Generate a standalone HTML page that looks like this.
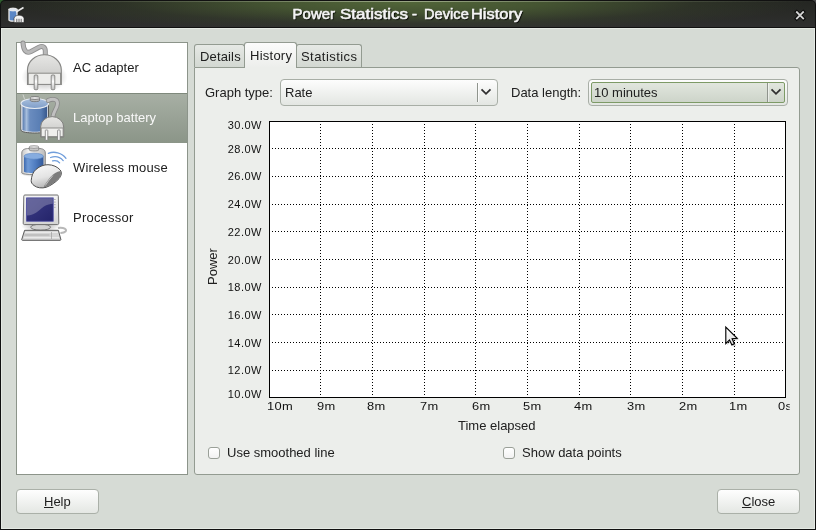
<!DOCTYPE html>
<html><head><meta charset="utf-8">
<style>
*{margin:0;padding:0;box-sizing:border-box}
html,body{width:816px;height:530px;overflow:hidden;background:#1a1a1a}
body{position:relative;font-family:"Liberation Sans",sans-serif;font-size:13px;color:#202020}
.a{position:absolute;white-space:nowrap}
#win{position:absolute;left:0;top:0;width:816px;height:530px;background:#111;border-radius:5px 5px 0 0}
#tb{position:absolute;left:1px;top:1px;width:814px;height:26px;border-radius:4px 4px 0 0;background:radial-gradient(ellipse 400px 30px at 407px 1px,rgba(82,102,57,1) 0%,rgba(74,92,52,.85) 35%,rgba(60,72,45,.35) 72%,rgba(40,44,36,0) 100%),linear-gradient(#242622,#2a2b28 55%,#2f2f2f)}
#tbhl{position:absolute;left:4px;top:1px;width:808px;height:1px;background:linear-gradient(90deg,rgba(150,160,140,0) 0%,rgba(150,162,135,.35) 25%,rgba(170,182,150,.8) 50%,rgba(150,162,135,.35) 75%,rgba(150,160,140,0) 100%)}
#title .t{position:absolute;top:5px;font:15px "Liberation Sans",sans-serif;color:#f4f4f4;-webkit-text-stroke:0.6px #f4f4f4;text-shadow:1px 1px 1px #000;transform-origin:0 0;line-height:normal}
#content{position:absolute;left:1px;top:28px;width:814px;height:501px;background:#d6dbd5;border:1px solid #e4e9e3}
#list{position:absolute;left:16px;top:42px;width:172px;height:433px;background:#fff;border:1px solid #8c948a}
.row{position:absolute;left:0;width:170px;height:50px}
.row .lbl{position:absolute;left:56px;top:17px}
.row.sel{background:linear-gradient(#a7afa4,#8b9588);border-top:1px solid #7f897c}
.row.sel .lbl{color:#f8f8f8;top:16px}
.tab{position:absolute;border:1px solid #939b91;border-bottom:none;border-radius:3px 3px 0 0;background:linear-gradient(#e6e9e5,#d3d8d2)}
.tab .tl{position:absolute;top:4px;left:5px}
#frame{position:absolute;left:194px;top:67px;width:606px;height:408px;background:#eceeeb;border:1px solid #939b91;border-radius:0 3px 3px 3px}
.combo{position:absolute;height:27px;border:1px solid #a8aea6;border-radius:4px;background:linear-gradient(#fdfdfd,#e3e6e2)}
.chk{position:absolute;width:12px;height:12px;border:1px solid #9aa098;border-radius:3px;background:linear-gradient(#fff,#f2f2f2)}
.btn{position:absolute;height:25px;border:1px solid #aab0a8;border-radius:4px;background:linear-gradient(#fefefe,#e4e7e3)}
.yl{position:absolute;font-size:11px;line-height:11px;letter-spacing:0.5px;color:#111;text-align:right;width:60px}
.xl{position:absolute;font-size:11px;line-height:11px;letter-spacing:0.3px;color:#111;transform:scaleX(1.17);transform-origin:0 0}
</style></head><body>
<div id="root" style="position:absolute;left:0;top:0;width:816px;height:530px;will-change:transform">
<div style="position:absolute;left:0;top:0;width:6px;height:6px;background:#2f5f2f"></div><div style="position:absolute;right:0;top:0;width:6px;height:6px;background:#4a4a4a"></div>
<div id="win"></div>
<div id="title"><div id="tb"></div><div id="tbhl"></div><div class="t" style="left:292.6px;transform:scaleX(1.0)">Power</div><div class="t" style="left:340.2px;transform:scaleX(1.135)">Statistics</div><div class="t" style="left:412.0px;transform:scaleX(1.0)">-</div><div class="t" style="left:423.9px;transform:scaleX(0.977)">Device</div><div class="t" style="left:470.6px;transform:scaleX(1.095)">History</div></div>
<div id="content"></div>

<div id="list">
  <div class="row" style="top:0"><div class="lbl">AC adapter</div></div>
  <div class="row sel" style="top:50px"><div class="lbl">Laptop battery</div></div>
  <div class="row" style="top:100px"><div class="lbl" style="letter-spacing:0.17px">Wireless mouse</div></div>
  <div class="row" style="top:150px"><div class="lbl" style="letter-spacing:0.22px">Processor</div></div>
</div>

<div class="tab" style="left:194px;top:44px;width:51px;height:23px"><div class="tl" style="letter-spacing:0.15px">Details</div></div>
<div class="tab" style="left:296px;top:44px;width:66px;height:23px"><div class="tl" style="left:4px;letter-spacing:0.45px">Statistics</div></div>
<div id="frame"></div>
<div class="tab" style="left:244px;top:42px;width:53px;height:26px;background:linear-gradient(#fbfbfb,#eceeeb);z-index:2"><div class="tl" style="top:5px;left:5px;letter-spacing:0.25px">History</div></div>

<div class="a" style="left:205px;top:85px">Graph type:</div>
<div class="combo" style="left:280px;top:79px;width:218px"></div>
<div class="a" style="left:285px;top:85px">Rate</div>
<div class="a" style="left:511px;top:85px">Data length:</div>
<div class="combo" style="left:588px;top:79px;width:200px"></div>
<div style="position:absolute;left:591px;top:82px;width:194px;height:21px;border:1px solid #7d9a66;border-radius:2px;background:linear-gradient(#e1e6de,#cdd4c9)"></div>
<div class="a" style="left:594px;top:85px">10 minutes</div>
<svg class="a" style="left:0;top:0" width="816" height="530">
<path d="M477.5 83V102" stroke="#8f948d" stroke-width="1"/><path d="M478.5 83V102" stroke="#fff" stroke-opacity=".7" stroke-width="1"/>
<path d="M481.5 89.3L486 93.8L490.5 89.3" fill="none" stroke="#303030" stroke-width="1.8"/>
<path d="M767.5 83V102" stroke="#8f948d" stroke-width="1"/><path d="M768.5 83V102" stroke="#fff" stroke-opacity=".5" stroke-width="1"/>
<path d="M771.5 89.3L776 93.8L780.5 89.3" fill="none" stroke="#303030" stroke-width="1.8"/>
</svg>


<svg class="a" style="left:0;top:0" width="816" height="530">
<rect x="269.5" y="121.5" width="516" height="276" fill="#fff" stroke="#000" stroke-width="1"/>
<path d="M320.5 124V397M372.5 124V397M424.5 124V397M475.5 124V397M527.5 124V397M579.5 124V397M630.5 124V397M682.5 124V397M734.5 124V397M272 148.5H785M272 176.5H785M272 204.5H785M272 231.5H785M272 259.5H785M272 287.5H785M272 314.5H785M272 342.5H785M272 370.5H785" stroke="#000" stroke-width="1" stroke-dasharray="1 2" fill="none"/>
</svg>

<div class="yl" style="left:202px;top:120px">30.0W</div>
<div class="yl" style="left:202px;top:144px">28.0W</div>
<div class="yl" style="left:202px;top:171px">26.0W</div>
<div class="yl" style="left:202px;top:199px">24.0W</div>
<div class="yl" style="left:202px;top:227px">22.0W</div>
<div class="yl" style="left:202px;top:255px">20.0W</div>
<div class="yl" style="left:202px;top:282px">18.0W</div>
<div class="yl" style="left:202px;top:310px">16.0W</div>
<div class="yl" style="left:202px;top:338px">14.0W</div>
<div class="yl" style="left:202px;top:365px">12.0W</div>
<div class="yl" style="left:202px;top:389px">10.0W</div>
<div class="xl" style="left:267px;top:401px">10m</div>
<div class="xl" style="left:317px;top:401px">9m</div>
<div class="xl" style="left:367px;top:401px">8m</div>
<div class="xl" style="left:420px;top:401px">7m</div>
<div class="xl" style="left:472px;top:401px">6m</div>
<div class="xl" style="left:523px;top:401px">5m</div>
<div class="xl" style="left:574px;top:401px">4m</div>
<div class="xl" style="left:627px;top:401px">3m</div>
<div class="xl" style="left:679px;top:401px">2m</div>
<div class="xl" style="left:729px;top:401px">1m</div>
<div class="xl" style="left:778px;top:401px;width:10.3px;overflow:hidden">0s</div>
<div class="a" style="left:458px;top:418px">Time elapsed</div>
<div class="a" style="left:205px;top:285px;transform:rotate(-90deg);transform-origin:0 0">Power</div>
<div class="chk" style="left:208px;top:447px"></div>
<div class="a" style="left:227px;top:445px">Use smoothed line</div>
<div class="chk" style="left:503px;top:447px"></div>
<div class="a" style="left:522px;top:445px">Show data points</div>

<div class="btn" style="left:16px;top:489px;width:83px"></div>
<div class="a" style="left:44px;top:494px"><u>H</u>elp</div>
<div class="btn" style="left:717px;top:489px;width:83px"></div>
<div class="a" style="left:742px;top:494px"><u>C</u>lose</div>
<!-- ICONS -->
<svg class="a" style="left:0;top:0;z-index:3" width="816" height="530">
<defs>
<radialGradient id="shd" cx="0.5" cy="0.5" r="0.5"><stop offset="0" stop-color="#000" stop-opacity=".36"/><stop offset="1" stop-color="#000" stop-opacity="0"/></radialGradient>
<linearGradient id="dome" x1="0" y1="0" x2="0" y2="1"><stop offset="0" stop-color="#e6e6e4"/><stop offset="1" stop-color="#c4c4c2"/></linearGradient>
<linearGradient id="prong" x1="0" y1="0" x2="0" y2="1"><stop offset="0" stop-color="#c8c8c8"/><stop offset=".45" stop-color="#fdfdfd"/><stop offset="1" stop-color="#bdbdbd"/></linearGradient>
<linearGradient id="bat" x1="0" y1="0" x2="1" y2="0"><stop offset="0" stop-color="#5275ab"/><stop offset=".17" stop-color="#a7bedd"/><stop offset=".3" stop-color="#6a8cbf"/><stop offset=".75" stop-color="#587db3"/><stop offset="1" stop-color="#37578c"/></linearGradient>
<linearGradient id="battop" x1="0" y1="0" x2="0" y2="1"><stop offset="0" stop-color="#a9bfdd"/><stop offset="1" stop-color="#7e9dc8"/></linearGradient>
<linearGradient id="liq" x1="0" y1="0" x2="1" y2="0"><stop offset="0" stop-color="#3f6aae"/><stop offset=".2" stop-color="#6f9ad6"/><stop offset=".6" stop-color="#4f7cc0"/><stop offset="1" stop-color="#32599a"/></linearGradient>
<linearGradient id="jar" x1="0" y1="0" x2="1" y2="0"><stop offset="0" stop-color="#c8c8c8"/><stop offset=".3" stop-color="#f2f2f2"/><stop offset="1" stop-color="#bcbcbc"/></linearGradient>
<linearGradient id="mouse" x1="0" y1="0" x2="0.3" y2="1"><stop offset="0" stop-color="#fafafa"/><stop offset=".6" stop-color="#e4e4e4"/><stop offset="1" stop-color="#b8b8b8"/></linearGradient>
<linearGradient id="scr" x1="0" y1="0" x2="1" y2="1"><stop offset="0" stop-color="#3c3c86"/><stop offset="1" stop-color="#24246a"/></linearGradient>
<linearGradient id="bez" x1="0" y1="0" x2="0" y2="1"><stop offset="0" stop-color="#f4f4f4"/><stop offset="1" stop-color="#d4d4d4"/></linearGradient>
</defs>

<!-- AC adapter (17,43) -->
<g transform="translate(17,43)">
<ellipse cx="27.5" cy="34" rx="23" ry="15" fill="url(#shd)"/>
<path d="M6,0 C6.5,7 9,11 14,8.5 L22,4.2 C26,2.3 28.3,4.5 28.3,8 L28.3,13" fill="none" stroke="#8f8f8f" stroke-width="5" stroke-linecap="round"/>
<path d="M6,0 C6.5,7 9,11 14,8.5 L22,4.2 C26,2.3 28.3,4.5 28.3,8 L28.3,13" fill="none" stroke="#b9b9b9" stroke-width="3.2" stroke-linecap="round"/>
<path d="M10.5,41.5 V27 A16.9,15.2 0 0 1 44.3,27 V41.5 Z" fill="url(#dome)" stroke="#858583" stroke-width="1.1"/>
<rect x="11.2" y="30.2" width="32.4" height="11.2" fill="#ececea" stroke="#8a8a88" stroke-width="1"/>
<rect x="17.2" y="32" width="3.6" height="14.7" rx="1" fill="url(#prong)" stroke="#7f7f7d" stroke-width=".9"/>
<rect x="34.2" y="32" width="3.6" height="14.7" rx="1" fill="url(#prong)" stroke="#7f7f7d" stroke-width=".9"/>
</g>

<!-- Laptop battery (17,93) -->
<g transform="translate(17,93)">
<path d="M6,1.5 L7.5,6" stroke="#d0d4cf" stroke-width="1" fill="none"/>
<path d="M4,10.5 V37 C4,41 31.5,41 31.5,37 V10.5 Z" fill="#e6e9ee" stroke="#5a5a5a" stroke-width="1"/><path d="M5.3,11 V36.6 C5.3,39.6 30.2,39.6 30.2,36.6 V11 Z" fill="url(#bat)"/>
<path d="M4.8,11 V36.5" stroke="#dfe3ea" stroke-width="1.2" opacity=".8"/>
<ellipse cx="17.75" cy="10.5" rx="13.75" ry="5" fill="url(#battop)" stroke="#e8ecf2" stroke-width="1.2"/>
<path d="M13.3,5 V7.5 C13.3,9 22.5,9 22.5,7.5 V5 Z" fill="#b9b9b9" stroke="#6f6f6f" stroke-width=".8"/>
<ellipse cx="17.9" cy="5" rx="4.6" ry="1.5" fill="#e4e4e4" stroke="#6f6f6f" stroke-width=".8"/>
<path d="M31,7.5 C36,5.5 40.5,6 40.5,10.5 C40.5,15 36.5,18 35.8,24" fill="none" stroke="#8a8a8a" stroke-width="4.6" stroke-linecap="round"/>
<path d="M31,7.5 C36,5.5 40.5,6 40.5,10.5 C40.5,15 36.5,18 35.8,24" fill="none" stroke="#c0c0c0" stroke-width="3" stroke-linecap="round"/>
<path d="M23.6,44 V34 A11.55,10.4 0 0 1 46.7,34 V44 Z" fill="url(#dome)" stroke="#7e7e7c" stroke-width="1"/>
<rect x="24.2" y="35" width="21.9" height="8.6" fill="#efefed" stroke="#868684" stroke-width=".9"/>
<rect x="28.3" y="37" width="2.5" height="10.3" rx=".6" fill="#fafafa" stroke="#7a7a78" stroke-width=".8"/>
<rect x="40.6" y="37" width="2.5" height="10.3" rx=".6" fill="#fafafa" stroke="#7a7a78" stroke-width=".8"/>
</g>

<!-- Wireless mouse (17,143) -->
<g transform="translate(17,143)">
<ellipse cx="17" cy="30" rx="15" ry="4" fill="url(#shd)"/>
<path d="M4.8,30 V10 C4.8,6.5 8,5.5 12,5.5 H21.5 C25.5,5.5 28.3,6.5 28.3,10 V30 C28.3,32 4.8,32 4.8,30 Z" fill="url(#jar)" stroke="#8a8a8a" stroke-width="1"/>
<path d="M7,13.2 V28.5 C7,30.5 26.4,30.5 26.4,28.5 V13.2 Z" fill="url(#liq)"/>
<ellipse cx="16.7" cy="13.2" rx="9.7" ry="3" fill="#86acdf" stroke="#5d86c2" stroke-width=".6"/>
<path d="M12.3,4 V7 C12.3,8.3 21.7,8.3 21.7,7 V4 Z" fill="#c6c6c6" stroke="#7d7d7d" stroke-width=".8"/>
<ellipse cx="17" cy="4" rx="4.7" ry="1.3" fill="#e6e6e6" stroke="#7d7d7d" stroke-width=".7"/>
<path d="M31.3,10.3 C37,8 45,9.5 49,15.3" fill="none" stroke="#6f9ddb" stroke-width="1.3" stroke-linecap="round"/>
<path d="M33.6,14.5 C38,13 43,14 46.2,17.6" fill="none" stroke="#6f9ddb" stroke-width="1.3" stroke-linecap="round"/>
<path d="M35.6,17.9 C38.5,17.2 41,17.9 42.6,19.8" fill="none" stroke="#6f9ddb" stroke-width="1.3" stroke-linecap="round"/>
<path d="M14.2,37.7 C14.5,33 16,29 19,26.4 C23,23 27,21.7 31,21.7 C36,21.8 40.5,23.8 43.2,27 C45,29.5 44.6,32.5 42,35.6 C39,39 34,42.5 29.2,44.3 C25,45.5 20,45 17,42.5 C15,41 14.2,39.5 14.2,37.7 Z" fill="url(#mouse)" stroke="#505050" stroke-width="1"/>
<path d="M43.4,28 C44.6,30.5 44,33 41.5,35.8 C38.5,39.2 33.5,42.6 28.6,44.1 C27.5,44.4 26.5,44 27,43 C29,40 31,37 33.5,34 C36.5,30.5 39.8,28.5 43.4,28 Z" fill="#7c7c7c"/>
<path d="M28.2,42.6 C30.5,39 33,35.8 35.8,32.6" fill="none" stroke="#f0f0f0" stroke-width=".8" opacity=".8"/>
</g>

<!-- Processor (17,193) -->
<g transform="translate(17,193)">
<ellipse cx="24" cy="33" rx="20" ry="6" fill="url(#shd)"/>
<path d="M41,34.9 C47,34 50.5,36.5 48.5,38.5 C47,40 44.5,40 43.4,40.1" fill="none" stroke="#b8b8b8" stroke-width="2"/>
<ellipse cx="23.6" cy="34.2" rx="9.9" ry="3" fill="#d2d2d2" stroke="#7a7a7a" stroke-width="1"/>
<path d="M7.8,2 H40.3 C41,2 41.3,2.5 41.3,3.2 L41.8,30.3 C41.8,31 41.3,31.6 40.6,31.6 H7.4 C6.7,31.6 6.2,31 6.2,30.3 L6.8,3.2 C6.8,2.5 7.2,2 7.8,2 Z" fill="url(#bez)" stroke="#6f6f6f" stroke-width="1"/>
<rect x="9.6" y="4.9" width="26.6" height="23.3" fill="url(#scr)" stroke="#4646a0" stroke-width=".8"/>
<path d="M10,5.3 H35.8 V10.8 C30,11 26,14 22,17.5 C18,21 14,22.5 10,22.6 Z" fill="#8a8ab0" opacity=".55"/>
<g fill="#8a8a8a"><rect x="37.4" y="6" width="1" height="1"/><rect x="37.4" y="8.6" width="1" height="1"/><rect x="37.4" y="11.2" width="1" height="1"/><rect x="37.4" y="13.8" width="1" height="1"/></g>
<path d="M7.6,37.3 H41.4 L43.9,46.6 C43.9,47 43.6,47.3 43.2,47.3 H5.4 C5,47.3 4.7,47 4.7,46.6 Z" fill="#d4d4d4" stroke="#595959" stroke-width="1"/>
<g fill="none" stroke="#f2f2f2" stroke-width=".9"><path d="M8,39.3 H41"/><path d="M7,44.7 H42"/></g>
<g fill="none" stroke="#9c9c9c" stroke-width=".7"><path d="M7.5,42 H32.5"/><path d="M34.5,39 V46"/></g>
</g>

<!-- Title icon -->
<g transform="translate(0,0)">
<path d="M9,9.5 V20 C9,21.5 17,21.5 17,20 V9.5 Z" fill="#5b87c6" stroke="#ececec" stroke-width="1.3"/>
<ellipse cx="13" cy="9.5" rx="4" ry="1.4" fill="#dfe6ef" stroke="#ececec" stroke-width="1"/>
<path d="M16,12 L23.5,7.5" stroke="#ececec" stroke-width="1.6"/>
<path d="M14,22.5 V18.5 C14,16.5 16.5,15.2 19,15.2 C21.5,15.2 24,16.5 24,18.5 V22.5 Z" fill="#f4f4f4" stroke="#2a2a2a" stroke-width=".6"/>
<g stroke="#555" stroke-width=".9"><path d="M16.8,18.8 V22.5"/><path d="M19,18.8 V22.5"/><path d="M21.2,18.8 V22.5"/></g>
</g>

<!-- Close X -->
<g transform="translate(800,15.3)">
<path d="M-3.3,-3.3 L3.3,3.3 M3.3,-3.3 L-3.3,3.3" stroke="#0a0a0a" stroke-width="3.6" stroke-linecap="square"/>
<path d="M-3.1,-3.1 L3.1,3.1 M3.1,-3.1 L-3.1,3.1" stroke="#d4d4d4" stroke-width="1.9" stroke-linecap="square"/>
</g>
</svg>
<!-- /ICONS -->
<svg class="a" style="left:0;top:0;z-index:5" width="816" height="530">
<defs><linearGradient id="cur" x1="0" y1="0" x2="1" y2="1"><stop offset="0" stop-color="#ffffff"/><stop offset="1" stop-color="#dcdcdc"/></linearGradient></defs>
<path d="M726.5,328 L726.5,344.5 L730.2,340.8 L732.6,345.8 L735.3,344.6 L732.9,339.6 L738,339.2 Z" fill="#000" opacity=".18" transform="translate(0.8,0.8)"/>
<path d="M725.8,327.2 L725.8,343.6 L729.5,339.9 L731.9,344.9 L734.4,343.8 L732.1,338.8 L737.2,338.4 Z" fill="url(#cur)" stroke="#000" stroke-width="1.15" stroke-linejoin="miter"/>
</svg>

</div>
</body></html>
